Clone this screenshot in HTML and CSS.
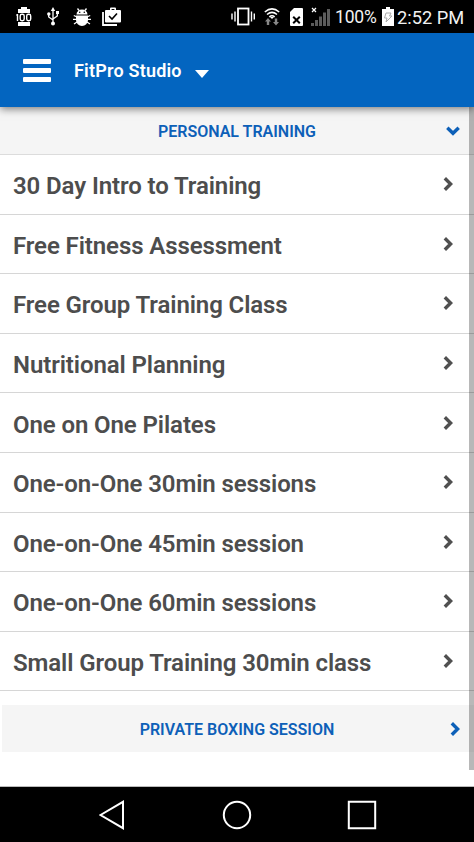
FILE: index.html
```html
<!DOCTYPE html>
<html lang="en">
<head>
<meta charset="utf-8">
<title>FitPro Studio</title>
<link rel="stylesheet" href="styles.css">
</head>
<body>
<div class="phone">
  <header class="status">
    <div class="status-left">
      <svg class="i-cell" width="16" height="20" viewBox="0 0 16 20"><path fill="#fff" d="M5 0h6v2h3v4H2V2h3zM2 15h12v4H2z"/><path d="M1.500 7v7M.3 8h1" stroke="#fff" stroke-width="1.400"/><rect x="4.200" y="7.200" width="4" height="6.500" rx="1.700" fill="none" stroke="#fff" stroke-width="1.400"/><rect x="10.700" y="7.200" width="4" height="6.500" rx="1.700" fill="none" stroke="#fff" stroke-width="1.400"/></svg>
      <svg class="i-usb" width="12" height="20" viewBox="0 0 12 20"><g fill="none" stroke="#fff" stroke-width="1.300"><path d="M6 3v13M1.700 7v3L6 13M10.300 6v3L6 12"/></g><g fill="#fff"><path d="M6 0l2.200 4H3.800zM9 4h3v3H9z"/><circle cx="1.800" cy="7" r="1.700"/><circle cx="6" cy="16.500" r="2"/></g></svg>
      <svg class="i-bug" width="18" height="18" viewBox="0 0 18 18"><path fill="#fff" d="M3.500 6.500a5.500 5 0 0 1 11 0zM3 7.500h12V12a6 6 0 0 1-12 0z"/><path d="M6 2.500L4.500.5M12 2.500L13.500.5M4 9L.8 7.500M14 9l3.200-1.500M0 11.300h18M4 14l-3 2M14 14l3 2" stroke="#fff" stroke-width="1.300"/><circle cx="6.700" cy="4.300" r=".8"/><circle cx="11.300" cy="4.300" r=".8"/></svg>
      <svg class="i-bag" width="19" height="19" viewBox="0 0 19 19"><path d="M1 5v13h14" fill="none" stroke="#fff" stroke-width="1.800"/><path fill="#fff" fill-rule="evenodd" d="M8 3V1.500Q8 .5 9 .5h4q1 0 1 1V3h4q1 0 1 1v10.500q0 1-1 1H4q-1 0-1-1V4q0-1 1-1zm1.600 0h2.800V2H9.600z"/><path d="M7 9l3 3 5-5.500" fill="none" stroke="#000" stroke-width="1.600"/></svg>
    </div>
    <div class="status-right">
      <svg class="i-vib" width="24" height="19" viewBox="0 0 24 19"><rect x="7" y="1.500" width="10.500" height="16" fill="none" stroke="#fff" stroke-width="1.800"/><path d="M4 4.500v10M1 6.500v6M20.500 4.500v10M23.300 6.500v6" stroke="#fff" stroke-width="1.400"/></svg>
      <svg class="i-wifi" width="16" height="18" viewBox="0 0 16 18"><path d="M.8 4Q8-2.200 15.200 4M3 6.500q5-4.200 10 0M5.300 8.800q2.700-2 5.400 0" fill="none" stroke="#fff" stroke-width="1.500"/><path d="M8 11l-2-2h4z" fill="#fff"/><path fill="#888" d="M4 10l3 3.500H5.200V17H2.800v-3.500H1zM12 17.500L9 14h1.800v-3.500h2.400V14H15z"/></svg>
      <svg class="i-sim" width="13" height="18" viewBox="0 0 13 18"><path fill="#fff" d="M4 0h8q1 0 1 1v16q0 1-1 1H1q-1 0-1-1V4z"/><path d="M3.200 8.700l6.600 6.600m0-6.600l-6.600 6.600" stroke="#000" stroke-width="2"/></svg>
      <svg class="i-sig" width="19" height="20" viewBox="0 0 19 20"><path d="M1 1l4 4m0-4L1 5" stroke="#fff" stroke-width="1.200"/><path fill="#5c5c5c" d="M0 16h3v3H0zM4 13h3v6H4zM8 9.500h3V19H8zM12 5.500h3V19h-3zM16 2h3v17h-3z"/></svg>
      <span class="percent">100%</span>
      <svg class="i-bat" width="12" height="19" viewBox="0 0 12 19"><path fill="#fff" d="M4 0h4v2h4v17H0V2h4z"/><path d="M4 6h5L7.500 9H10l-6 6 1-4H2.500z" fill="#fff" stroke="#aaa"/></svg>
      <span class="time">2:52 PM</span>
    </div>
  </header>
  <nav class="appbar">
    <div class="menu"><i></i><i></i><i></i></div>
    <span class="title">FitPro Studio</span>
    <svg class="caret" width="14" height="8" viewBox="0 0 14 8"><path fill="#fff" d="M0 0h14L7 8z"/></svg>
  </nav>
  <main class="content">
    <section class="group open"><span>PERSONAL TRAINING</span><svg class="down" width="14" height="10" viewBox="0 0 14 10"><path d="M1.300 1.800L7 7.300l5.700-5.500"/></svg></section>
    <ul class="list">
      <li><span>30 Day Intro to Training</span><svg width="10" height="14" viewBox="0 0 10 14"><path d="M1.800 1.200L7.600 7l-5.800 5.800"/></svg></li>
      <li><span>Free Fitness Assessment</span><svg width="10" height="14" viewBox="0 0 10 14"><path d="M1.800 1.200L7.600 7l-5.800 5.800"/></svg></li>
      <li><span>Free Group Training Class</span><svg width="10" height="14" viewBox="0 0 10 14"><path d="M1.800 1.200L7.600 7l-5.800 5.800"/></svg></li>
      <li><span>Nutritional Planning</span><svg width="10" height="14" viewBox="0 0 10 14"><path d="M1.800 1.200L7.600 7l-5.800 5.800"/></svg></li>
      <li><span>One on One Pilates</span><svg width="10" height="14" viewBox="0 0 10 14"><path d="M1.800 1.200L7.600 7l-5.800 5.800"/></svg></li>
      <li><span>One-on-One 30min sessions</span><svg width="10" height="14" viewBox="0 0 10 14"><path d="M1.800 1.200L7.600 7l-5.800 5.800"/></svg></li>
      <li><span>One-on-One 45min session</span><svg width="10" height="14" viewBox="0 0 10 14"><path d="M1.800 1.200L7.600 7l-5.800 5.800"/></svg></li>
      <li><span>One-on-One 60min sessions</span><svg width="10" height="14" viewBox="0 0 10 14"><path d="M1.800 1.200L7.600 7l-5.800 5.800"/></svg></li>
      <li><span>Small Group Training 30min class</span><svg width="10" height="14" viewBox="0 0 10 14"><path d="M1.800 1.200L7.600 7l-5.800 5.800"/></svg></li>
    </ul>
    <section class="group closed"><span>PRIVATE BOXING SESSION</span><svg class="right" width="10" height="14" viewBox="0 0 10 14"><path d="M1.800 1.200L7.600 7l-5.800 5.800"/></svg></section>
    <div class="scrollbar"></div>
  </main>
  <footer class="softkeys">
    <svg width="26" height="30" viewBox="0 0 26 30"><path d="M1.500 15L24 1.800v26.400z"/></svg>
    <svg class="home" width="30" height="30" viewBox="0 0 30 30"><circle cx="15" cy="15" r="13.200"/></svg>
    <svg width="30" height="30" viewBox="0 0 30 30"><path d="M1.800 1.800h26.400v26.400H1.800z"/></svg>
  </footer>
</div>
</body>
</html>
```
FILE: styles.css
```css
* { box-sizing: border-box; }
body { margin: 0; font-family: Roboto, "Liberation Sans", sans-serif; background: #fff; }
.phone { width: 474px; height: 842px; display: flex; flex-direction: column; overflow: hidden; }
svg { display: block; flex: none; }
.status { height: 33px; background: #000; color: #f2f2f2; display: flex; justify-content: space-between; padding: 0 10px 0 16px; flex: none; }
.status-left, .status-right { display: flex; align-items: center; }
.i-usb { margin-left: 15px; }
.i-bug { margin-left: 14px; }
.i-bag { margin-left: 11px; }
.i-wifi { margin-left: 9px; }
.i-sim { margin-left: 10px; }
.i-sig { margin-left: 8px; }
.percent { margin-left: 5px; width: 42px; font-size: 17.5px; letter-spacing: -0.2px; padding-top: 1px; line-height: 33px; white-space: nowrap; }
.i-bat { margin-left: 5px; }
.time { margin-left: 3px; width: 67px; font-size: 18.3px; padding-top: 2px; line-height: 33px; white-space: nowrap; }
.appbar { height: 74px; flex: none; background: #0365c0; color: #fff; display: flex; align-items: center; padding-left: 23px; box-shadow: 0 2px 8px rgba(0,0,0,.5); position: relative; z-index: 2; }
.menu { display: flex; flex-direction: column; gap: 4px; width: 28px; }
.menu i { height: 5px; background: #fff; border-radius: 1px; }
.title { margin-left: 23px; width: 109px; padding-top: 2px; font-size: 18px; letter-spacing: 0.2px; font-weight: 600; line-height: 24px; white-space: nowrap; }
.caret { margin: 8px 0 0 12px; }
.content { height: 680px; flex: none; position: relative; border-bottom: 1px solid #bbb; }
.group { background: #f5f5f5; color: #0d60b8; display: grid; grid-template-columns: 1fr auto; align-items: center; font-size: 16px; font-weight: 600; text-align: center; }
.group svg path { fill: none; stroke: #0d60b8; stroke-width: 3.4; }
.open { height: 48px; border-bottom: 1px solid #dcdcdc; padding: 1px 14px 0 28px; }
.closed { height: 47px; margin: 14px 0 0 2px; padding: 1px 14px 0 22px; }
.list { list-style: none; margin: 0; padding: 0; }
.list li { height: 59.6px; border-bottom: 1px solid #d6d6d6; display: flex; align-items: center; justify-content: space-between; padding: 4px 21px 0 13px; }
.list span { font-size: 24px; line-height: 30px; letter-spacing: -0.1px; font-weight: 600; color: #4d4d4d; white-space: nowrap; }
.list svg { margin-top: -4px; }
.list path { fill: none; stroke: #505050; stroke-width: 3.4; }
.scrollbar { position: absolute; right: 0; top: 0; width: 5px; height: 663px; background: rgba(0,0,0,.28); }
.softkeys { height: 55px; flex: none; background: #000; display: flex; justify-content: space-between; align-items: center; padding: 0 97px 0 99px; }
.home { margin-left: 2px; }
.softkeys path, .softkeys circle { fill: none; stroke: #fff; stroke-width: 2; }
```
